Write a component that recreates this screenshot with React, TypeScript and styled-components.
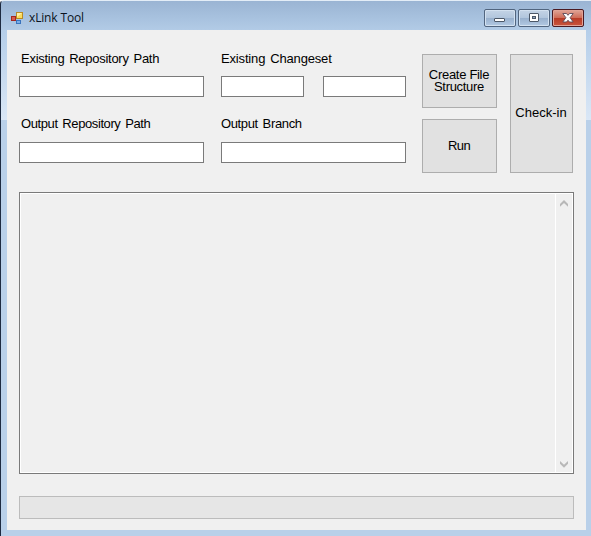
import React from "react";
import styled, { createGlobalStyle } from "styled-components";

const Global = createGlobalStyle`
  * { box-sizing: border-box; }
  body { margin: 0; overflow: hidden; }
`;

const Frame = styled.div`
  width: 591px;
  height: 536px;
  display: flex;
  flex-direction: column;
  padding: 0 5px 6px 6px;
  border-left: 1px solid #1d2a40;
  border-top: 1px solid #e3edf7;
  border-top-left-radius: 4px;
  background:
    linear-gradient(#9ab4d3, #a8c2df 60%, #b2cbe6) 0 0 / 100% 29px no-repeat,
    linear-gradient(#b5cee9, #dae7f6) 0 29px / 100% 90px no-repeat,
    #b9d0e9;
`;

const TitleBar = styled.header`
  height: 29px;
  flex: none;
  display: flex;
  align-items: flex-start;
  padding: 0 2px 0 3px;
`;

const AppIcon = styled.svg`
  width: 15px;
  height: 15px;
  margin-top: 10px;
`;

const Title = styled.h1`
  margin: 8px 0 0 4px;
  font: 400 12px/18px "Open Sans", "Noto Sans", sans-serif;
  letter-spacing: -0.15px;
  color: #0b1320;
  flex: 1;
`;

const Controls = styled.div`
  display: flex;
  gap: 2px;
  margin-top: 8px;
`;

const ControlButton = styled.button<{ $close?: boolean }>`
  width: 32px;
  height: 18px;
  padding: 0;
  display: flex;
  align-items: center;
  justify-content: center;
  border: 1px solid ${(p) => (p.$close ? "#4a1a22" : "#51657f")};
  border-radius: 2px;
  box-shadow: inset 0 0 0 1px ${(p) => (p.$close ? "#e2a295" : "#d3e1f0")};
  background: ${(p) =>
    p.$close
      ? "linear-gradient(#dc9a8b 0 10%, #cf6c58 48%, #b83a25 50%, #c9553e)"
      : "linear-gradient(#c4d4e6, #b2c6dd 48%, #98b0cd 50%, #b2c9e3)"};
`;

const Client = styled.main`
  flex: 1;
  display: flex;
  flex-direction: column;
  padding: 24px 12px 11px 12px;
  background: #f0f0f0;
  font: 13px/13px "Liberation Sans", Arial, sans-serif;
  color: #000;
`;

const Form = styled.section`
  height: 119px;
  display: grid;
  grid-template-columns: 185px 185px 151px;
  column-gap: 17px;
`;

const Column = styled.div`
  display: flex;
  flex-direction: column;
`;

const Field = styled.div`
  height: 66px;
`;

const Label = styled.label<{ $spacing?: number; $indent?: number; $lift?: number }>`
  display: block;
  height: 22px;
  padding-left: ${(p) => p.$indent ?? 0}px;
  line-height: ${(p) => 9 - (p.$lift ?? 0)}px;
  white-space: nowrap;
  letter-spacing: ${(p) => p.$spacing ?? 0}px;
  word-spacing: 1.5px;
`;

const InputRow = styled.div`
  display: flex;
  gap: 19px;
`;

const Input = styled.input`
  display: block;
  width: 100%;
  min-width: 0;
  height: 21px;
  padding: 0 3px;
  border: 1px solid #7a7a7a;
  border-radius: 0;
  background: #fff;
  font: inherit;
  outline: 0;
`;

const Actions = styled.div`
  display: grid;
  grid-template: 54px 54px / 75px 63px;
  gap: 11px 13px;
  margin-left: -1px;
`;

const Button = styled.button<{ $tall?: boolean; $spacing?: number }>`
  grid-row: ${(p) => (p.$tall ? "1 / 3" : "auto")};
  grid-column: ${(p) => (p.$tall ? 2 : 1)};
  padding: 0 1px 1px 0;
  border: 1px solid #adadad;
  background: #e1e1e1;
  color: #000;
  font: inherit;
  line-height: 12px;
  letter-spacing: ${(p) => p.$spacing ?? 0}px;
  white-space: nowrap;
`;

const LogBox = styled.section`
  height: 282px;
  margin-top: 19px;
  display: flex;
  border: 1px solid #7a7a7a;
  box-shadow: inset 0 0 0 1px #fff;
  background: #f0f0f0;
`;

const LogText = styled.div`
  flex: 1;
`;

const ScrollBar = styled.div`
  width: 18px;
  display: flex;
  flex-direction: column;
  justify-content: space-between;
  padding: 7px 0 5px 4px;
  border-left: 1px solid #fff;
`;

const Progress = styled.div`
  height: 23px;
  margin-top: 22px;
  border: 1px solid #bcbcbc;
  background: #e6e6e6;
`;

const Chevron = ({ down }: { down?: boolean }) => (
  <svg width="8" height="7" viewBox="0 0 8 7">
    <path
      d={down ? "M0 0v2.7L4 6.8 8 2.7V0L4 3.8Z" : "M0 6.8V4.1L4 0 8 4.1v2.7L4 3Z"}
      fill="#b8b8b8"
    />
  </svg>
);

export default function App() {
  return (
    <>
      <Global />
      <Frame>
        <TitleBar>
          <AppIcon viewBox="0 0 15 15">
            <rect x="1.5" y="5.5" width="4" height="4" fill="#d65a4c" stroke="#a32620" />
            <rect x="6.5" y="1.5" width="6" height="6" fill="#fbdc5c" stroke="#b88a24" />
            <path d="M7 2h5L7 6Z" fill="#fff1a8" />
            <rect x="6.5" y="9.5" width="4" height="3" fill="#78aeea" stroke="#3973bd" />
          </AppIcon>
          <Title>xLink Tool</Title>
          <Controls>
            <ControlButton aria-label="Minimize">
              <svg width="12" height="12" viewBox="0 0 12 12">
                <rect x="0.5" y="6.5" width="10" height="3" rx="0.5" fill="#fff" stroke="#4c5868" />
              </svg>
            </ControlButton>
            <ControlButton aria-label="Maximize">
              <svg width="12" height="12" viewBox="0 0 12 12">
                <rect x="1.5" y="1.5" width="9" height="8" rx="0.5" fill="#fff" stroke="#4c5868" />
                <rect x="4.5" y="4.5" width="3" height="2" fill="#8fa5bf" stroke="#4c5868" />
              </svg>
            </ControlButton>
            <ControlButton $close aria-label="Close">
              <svg width="12" height="12" viewBox="0 0 12 12">
                <path
                  d="M0.8 1.5h3.7L6 3.3 7.5 1.5h3.7L8.1 5.7l3.1 4.3H7.5L6 8.2 4.5 10H0.8l3.1-4.3Z"
                  fill="#fff"
                  stroke="#5b4a58"
                  strokeWidth="0.9"
                />
              </svg>
            </ControlButton>
          </Controls>
        </TitleBar>
        <Client>
          <Form>
            <Column>
              <Field>
                <Label $indent={2} $spacing={-0.27}>Existing Repository Path</Label>
                <Input />
              </Field>
              <Field>
                <Label $indent={2} $lift={1} $spacing={-0.4}>Output Repository Path</Label>
                <Input />
              </Field>
            </Column>
            <Column>
              <Field>
                <Label $spacing={-0.16}>Existing Changeset</Label>
                <InputRow>
                  <Input />
                  <Input />
                </InputRow>
              </Field>
              <Field>
                <Label $lift={1} $spacing={-0.36}>Output Branch</Label>
                <Input />
              </Field>
            </Column>
            <Actions>
              <Button $spacing={-0.3}>
                Create File
                <br />
                Structure
              </Button>
              <Button $tall>Check-in</Button>
              <Button $spacing={-0.6}>Run</Button>
            </Actions>
          </Form>
          <LogBox>
            <LogText />
            <ScrollBar>
              <Chevron />
              <Chevron down />
            </ScrollBar>
          </LogBox>
          <Progress />
        </Client>
      </Frame>
    </>
  );
}
